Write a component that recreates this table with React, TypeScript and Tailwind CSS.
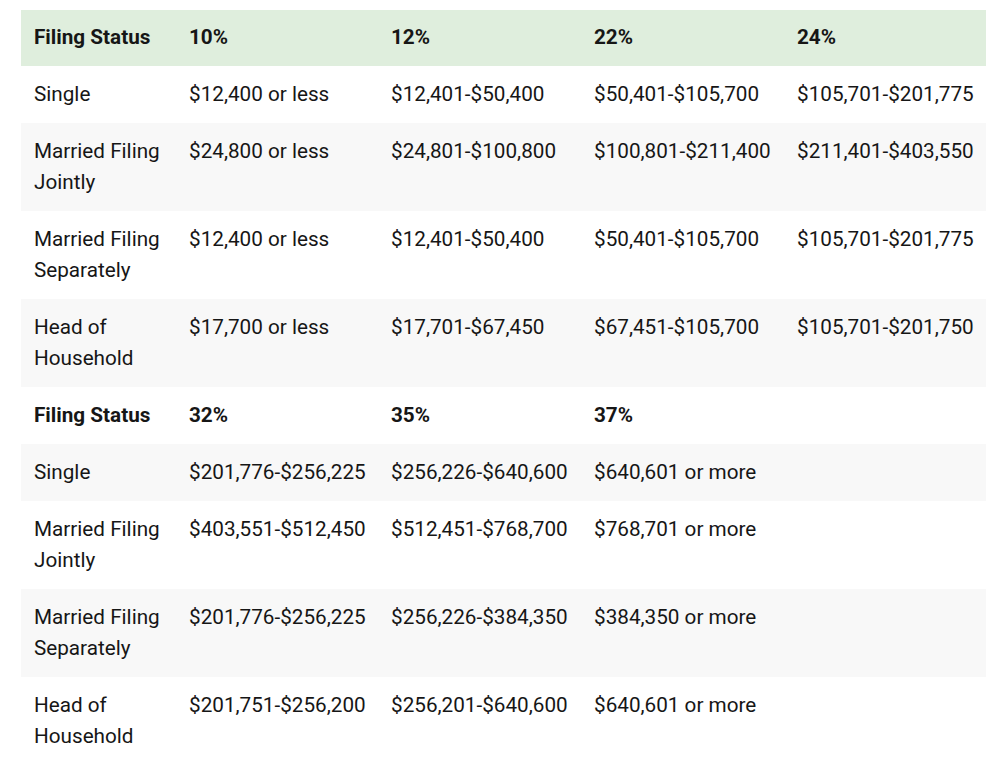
import React from "react";

const rows1 = [
  ["Single", "$12,400 or less", "$12,401-$50,400", "$50,401-$105,700", "$105,701-$201,775"],
  ["Married Filing Jointly", "$24,800 or less", "$24,801-$100,800", "$100,801-$211,400", "$211,401-$403,550"],
  ["Married Filing Separately", "$12,400 or less", "$12,401-$50,400", "$50,401-$105,700", "$105,701-$201,775"],
  ["Head of Household", "$17,700 or less", "$17,701-$67,450", "$67,451-$105,700", "$105,701-$201,750"],
];
const rows2 = [
  ["Single", "$201,776-$256,225", "$256,226-$640,600", "$640,601 or more", ""],
  ["Married Filing Jointly", "$403,551-$512,450", "$512,451-$768,700", "$768,701 or more", ""],
  ["Married Filing Separately", "$201,776-$256,225", "$256,226-$384,350", "$384,350 or more", ""],
  ["Head of Household", "$201,751-$256,200", "$256,201-$640,600", "$640,601 or more", ""],
];

export default function App() {
  const body: { cells: string[]; bold: boolean }[] = [
    ...rows1.map((c) => ({ cells: c, bold: false })),
    { cells: ["Filing Status", "32%", "35%", "37%", ""], bold: true },
    ...rows2.map((c) => ({ cells: c, bold: false })),
  ];
  return (
    <div className="bg-white w-[1000px] h-[757px] overflow-hidden pt-[10px] pl-[21px]" style={{ fontFamily: "Roboto, 'Noto Sans', sans-serif" }}>
      <table className="table-fixed border-collapse w-[965px] text-[20.7px] leading-[31px] text-[#161616]">
        <colgroup>
          <col className="w-[155px]" />
          <col className="w-[202px]" />
          <col className="w-[203px]" />
          <col className="w-[203px]" />
          <col className="w-[202px]" />
        </colgroup>
        <thead>
          <tr className="bg-[#dfeedd]">
            {["Filing Status", "10%", "12%", "22%", "24%"].map((h) => (
              <th key={h} className="text-left font-bold align-top pl-[13px] pr-[2px] pt-[12px] pb-[13px]">
                {h}
              </th>
            ))}
          </tr>
        </thead>
        <tbody>
          {body.map((r, i) => (
            <tr key={i} className={i % 2 === 1 ? "bg-[#f8f8f8]" : "bg-white"}>
              {r.cells.map((c, j) => (
                <td key={j} className={`align-top pl-[13px] pr-[2px] py-[13px] ${r.bold ? "font-bold" : ""}`}>
                  {c}
                </td>
              ))}
            </tr>
          ))}
        </tbody>
      </table>
    </div>
  );
}
